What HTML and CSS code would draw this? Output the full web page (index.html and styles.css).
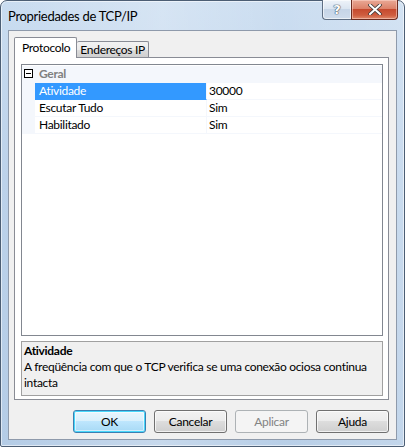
FILE: index.html
```html
<!DOCTYPE html>
<html lang="pt">
<head>
<meta charset="utf-8">
<title>Propriedades de TCP/IP</title>
<link rel="stylesheet" href="styles.css">
</head>
<body>
<div class="window">
  <div class="titlebar">
    <div class="title">Propriedades de TCP/IP</div>
    <div class="caption-buttons">
      <div class="cap-btn help"><span>?</span></div>
      <div class="cap-btn close">
        <svg width="14" height="11" viewBox="0 0 14 11"><path d="M2 1 L12 10 M12 1 L2 10" stroke="#3b3b3b" stroke-width="3.6" stroke-linecap="round"/><path d="M2 1 L12 10 M12 1 L2 10" stroke="#ffffff" stroke-width="2" stroke-linecap="round"/></svg>
      </div>
    </div>
  </div>
  <div class="client">
    <div class="tabs">
      <div class="tab selected">Protocolo</div>
      <div class="tab">Endereços IP</div>
    </div>
    <div class="panel">
      <div class="propgrid">
        <div class="row category">
          <div class="margin"><span class="expander"></span></div>
          <div class="cat-label">Geral</div>
        </div>
        <div class="row prop">
          <div class="margin"></div>
          <div class="name selected">Atividade</div>
          <div class="value">30000</div>
        </div>
        <div class="row prop">
          <div class="margin"></div>
          <div class="name">Escutar Tudo</div>
          <div class="value">Sim</div>
        </div>
        <div class="row prop">
          <div class="margin"></div>
          <div class="name">Habilitado</div>
          <div class="value">Sim</div>
        </div>
      </div>
      <div class="description">
        <div class="desc-title">Atividade</div>
        <div class="desc-text">A freqüência com que o TCP verifica se uma conexão ociosa continua intacta</div>
      </div>
    </div>
    <div class="buttons">
      <button class="btn default">OK</button>
      <button class="btn">Cancelar</button>
      <button class="btn" disabled>Aplicar</button>
      <button class="btn">Ajuda</button>
    </div>
  </div>
</div>
</body>
</html>
```
FILE: styles.css
```css
* { box-sizing: border-box; }
html, body {
  margin: 0;
  padding: 0;
  width: 405px;
  height: 447px;
  overflow: hidden;
  background: #ffffff;
}
body {
  font-family: Lato, "Noto Sans", sans-serif;
  font-size: 12px;
  letter-spacing: -0.3px;
  color: #000;
}
.window {
  width: 405px;
  height: 447px;
  border: 1px solid #4c5e74;
  border-radius: 7px 7px 2px 2px;
  background:
    linear-gradient(90deg, rgba(255,255,255,0) 0%, rgba(255,255,255,0.25) 40%, rgba(255,255,255,0.05) 70%, rgba(255,255,255,0.2) 100%),
    linear-gradient(180deg, #c9dcf0 0%, #bcd2ea 40%, #b4cce6 100%);
  box-shadow: inset 0 0 0 1px rgba(255,255,255,0.55);
  display: flex;
  flex-direction: column;
}
.titlebar {
  height: 29px;
  display: flex;
  align-items: flex-start;
  justify-content: space-between;
}
.title {
  padding: 8px 0 0 7px;
  line-height: 15px;
  font-size: 13px;
  color: #000;
}
.caption-buttons {
  display: flex;
  margin-right: 6px;
  margin-top: -1px;
}
.cap-btn {
  height: 20px;
  border: 1px solid #5f6f84;
  border-top: none;
  display: flex;
  align-items: center;
  justify-content: center;
}
.cap-btn.help {
  width: 29px;
  border-radius: 0 0 0 4px;
  border-right: none;
  background: linear-gradient(180deg, #eef3f9 0%, #dbe5f1 45%, #c6d5e7 50%, #cfdcec 100%);
  box-shadow: inset 0 0 0 1px rgba(255,255,255,0.6);
}
.cap-btn.help span {
  font-family: "DejaVu Sans", sans-serif;
  font-weight: bold;
  font-size: 13px;
  letter-spacing: 0;
  color: #ffffff;
  text-shadow: 0 0 1px #3d4b5c, 0 0 1px #3d4b5c, 0 0 1px #3d4b5c;
  line-height: 14px;
}
.cap-btn.close {
  width: 47px;
  border-radius: 0 0 4px 0;
  border-color: #6b2b20;
  background: linear-gradient(180deg, #e9a996 0%, #dc826a 45%, #c64a2f 50%, #cf5d3f 80%, #e08a6c 100%);
  box-shadow: inset 0 0 0 1px rgba(255,220,210,0.5);
}
.client {
  margin: 0 7px;
  height: 410px;
  border: 1px solid #8e9aab;
  background: #f0f0f0;
  padding: 6px 7px 0 5px;
  display: flex;
  flex-direction: column;
}
.tabs {
  display: flex;
  align-items: flex-end;
  height: 20px;
  position: relative;
  z-index: 1;
}
.tab {
  height: 16px;
  padding: 0 3px 0 3px;
  border: 1px solid #898c95;
  border-bottom: none;
  border-left: none;
  background: linear-gradient(180deg, #f2f2f2 0%, #ebebeb 50%, #dddddd 50%, #cfcfcf 100%);
  line-height: 15px;
  border-radius: 2px 2px 0 0;
}
.tab.selected {
  height: 21px;
  margin-bottom: -1px;
  padding: 2px 6px 0 7px;
  border-left: 1px solid #898c95;
  background: #ffffff;
  line-height: 16px;
}
.panel {
  width: 375px;
  height: 343px;
  border: 1px solid #898c95;
  background: #ffffff;
  padding: 6px 5px 0 6px;
  display: flex;
  flex-direction: column;
}
.propgrid {
  height: 272px;
  border: 1px solid #828790;
  background: #ffffff;
  padding-top: 1px;
}
.row {
  display: grid;
  grid-template-columns: 13px 172px 1fr;
  height: 17px;
}
.row .margin {
  background: #f4f7fc;
  position: relative;
}
.row.category {
  background: #f4f7fc;
}
.expander {
  position: absolute;
  left: 2px;
  top: 3px;
  width: 9px;
  height: 9px;
  border: 1px solid #000;
  background: #fff;
}
.expander::after {
  content: "";
  position: absolute;
  left: 1px;
  top: 3px;
  width: 5px;
  height: 1px;
  background: #000;
}
.cat-label {
  grid-column: 2 / 4;
  padding-left: 4px;
  line-height: 16px;
  font-weight: bold;
  color: #808080;
}
.row.prop .name,
.row.prop .value {
  line-height: 16px;
  border-bottom: 1px solid #f4f7fc;
  white-space: nowrap;
}
.row.prop .name {
  padding-left: 4px;
  border-right: 1px solid #f4f7fc;
}
.row.prop .name.selected {
  background: #3399ff;
  color: #ffffff;
  border-bottom-color: #3399ff;
}
.row.prop .value {
  padding-left: 2px;
}
.description {
  margin-top: 5px;
  height: 55px;
  border: 1px solid #a0a0a0;
  background: #f0f0f0;
  padding: 1px 3px 0 2px;
  line-height: 16px;
}
.desc-title {
  font-weight: bold;
}
.buttons {
  display: flex;
  justify-content: flex-end;
  gap: 8px;
  margin-top: 10px;
  padding-right: 0;
}
.btn {
  width: 73px;
  height: 23px;
  font-family: inherit;
  font-size: 12px;
  letter-spacing: -0.3px;
  color: #000;
  border: 1px solid #707070;
  border-radius: 3px;
  background: linear-gradient(180deg, #f2f2f2 0%, #ebebeb 50%, #dddddd 50%, #cfcfcf 100%);
  box-shadow: inset 0 0 0 1px rgba(255,255,255,0.7);
  padding: 0;
  line-height: 19px;
}
.btn.default {
  border-color: #3c7fb1;
  background: linear-gradient(180deg, #eaf6fd 0%, #d9f0fc 50%, #bee6fd 50%, #a7d9f5 100%);
  box-shadow: inset 0 0 0 1px #48d8fb, inset 0 0 0 2px rgba(255,255,255,0.5);
}
.btn:disabled {
  border-color: #adb2b5;
  background: #f4f4f4;
  color: #838383;
  box-shadow: none;
}
```
